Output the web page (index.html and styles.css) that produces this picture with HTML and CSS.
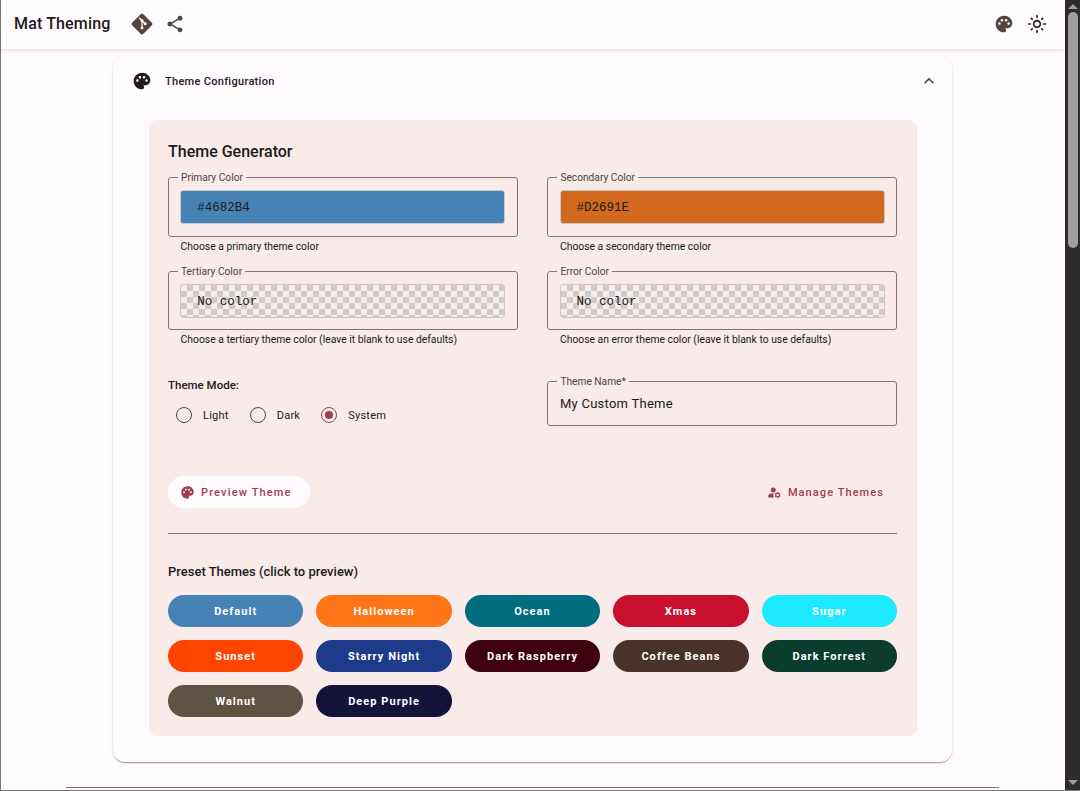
FILE: index.html
```html
<!DOCTYPE html>
<html>
<head>
	<meta charset="utf-8">
	<title>Mat Theming</title>
	<link rel="stylesheet" href="styles.css">
</head>
<body>
	<svg class="defs" aria-hidden="true">
		<symbol id="i-palette" viewBox="0 0 24 24"><path d="M12 2C6.49 2 2 6.49 2 12s4.49 10 10 10c1.38 0 2.5-1.12 2.5-2.5 0-.61-.23-1.2-.64-1.67-.08-.1-.13-.21-.13-.33 0-.28.22-.5.5-.5H16c3.31 0 6-2.69 6-6 0-4.96-4.49-9-10-9zm5.5 11c-.83 0-1.5-.67-1.5-1.5s.67-1.5 1.5-1.5 1.5.67 1.5 1.5-.67 1.5-1.5 1.5zm-3-4c-.83 0-1.5-.67-1.5-1.5S13.67 6 14.5 6s1.5.67 1.5 1.5S15.33 9 14.5 9zM5 11.5c0-.83.67-1.5 1.5-1.5s1.5.67 1.5 1.5S7.33 13 6.5 13 5 12.33 5 11.5zm6-4c0 .83-.67 1.5-1.5 1.5S8 8.33 8 7.5 8.67 6 9.5 6s1.5.67 1.5 1.5z"/></symbol>
		<symbol id="i-manage" viewBox="0 0 24 24"><circle cx="10" cy="8" r="4"/><path d="M10.67 13.02c-.22-.01-.44-.02-.67-.02-2.42 0-4.68.67-6.61 1.82-.88.52-1.39 1.5-1.39 2.53V20h9.26c-.79-1.13-1.26-2.51-1.26-4 0-1.07.25-2.07.67-2.98z"/><path d="M20.75 16c0-.22-.03-.42-.06-.63l1.14-1.01-1-1.73-1.45.49c-.32-.27-.68-.48-1.08-.63L18 11h-2l-.3 1.49c-.4.15-.76.36-1.08.63l-1.45-.49-1 1.73 1.14 1.01c-.03.21-.06.41-.06.63s.03.42.06.63l-1.14 1.01 1 1.73 1.45-.49c.32.27.68.48 1.08.63L16 21h2l.3-1.49c.4-.15.76-.36 1.08-.63l1.45.49 1-1.73-1.14-1.01c.03-.21.06-.41.06-.63zM17 18c-1.1 0-2-.9-2-2s.9-2 2-2 2 .9 2 2-.9 2-2 2z"/></symbol>
	</svg>

	<div class="window">
		<div class="app">
			<header class="toolbar">
				<span class="brand">Mat Theming</span>
				<svg class="tool git" viewBox="0 0 24 24">
					<rect x="4.2" y="4.2" width="15.6" height="15.6" rx="1.6" transform="rotate(45 12 12)"/>
					<path class="git-branch" d="M9.2 5.8l6 6M12 8.6v7.2"/>
					<circle class="git-node" cx="12" cy="8.6" r="1.5"/>
					<circle class="git-node" cx="15.2" cy="11.8" r="1.5"/>
					<circle class="git-node" cx="12" cy="15.8" r="1.5"/>
				</svg>
				<svg class="tool share" viewBox="0 0 24 24"><path d="M18 16.08c-.76 0-1.44.3-1.96.77L8.91 12.7c.05-.23.09-.46.09-.7s-.04-.47-.09-.7l7.05-4.11c.54.5 1.25.81 2.04.81 1.66 0 3-1.34 3-3s-1.34-3-3-3-3 1.34-3 3c0 .24.04.47.09.7L8.04 9.81C7.5 9.31 6.79 9 6 9c-1.66 0-3 1.34-3 3s1.34 3 3 3c.79 0 1.5-.31 2.04-.81l7.12 4.16c-.05.21-.08.43-.08.65 0 1.61 1.31 2.92 2.92 2.92s2.92-1.31 2.92-2.92-1.31-2.92-2.92-2.92z"/></svg>
				<span class="spacer"></span>
				<svg class="tool palette"><use href="#i-palette"/></svg>
				<svg class="tool sun" viewBox="0 0 24 24"><path d="M12 9c1.65 0 3 1.35 3 3s-1.35 3-3 3-3-1.35-3-3 1.35-3 3-3m0-2c-2.76 0-5 2.24-5 5s2.24 5 5 5 5-2.24 5-5-2.24-5-5-5zM2 13h2c.55 0 1-.45 1-1s-.45-1-1-1H2c-.55 0-1 .45-1 1s.45 1 1 1zm18 0h2c.55 0 1-.45 1-1s-.45-1-1-1h-2c-.55 0-1 .45-1 1s.45 1 1 1zM11 2v2c0 .55.45 1 1 1s1-.45 1-1V2c0-.55-.45-1-1-1s-1 .45-1 1zm0 18v2c0 .55.45 1 1 1s1-.45 1-1v-2c0-.55-.45-1-1-1s-1 .45-1 1zM5.99 4.58c-.39-.39-1.03-.39-1.41 0-.39.39-.39 1.03 0 1.41l1.06 1.06c.39.39 1.03.39 1.41 0s.39-1.03 0-1.41L5.99 4.58zm12.37 12.37c-.39-.39-1.03-.39-1.41 0-.39.39-.39 1.03 0 1.41l1.06 1.06c.39.39 1.03.39 1.41 0 .39-.39.39-1.03 0-1.41l-1.06-1.06zm1.06-10.96c.39-.39.39-1.03 0-1.41-.39-.39-1.03-.39-1.41 0l-1.06 1.06c-.39.39-.39 1.03 0 1.41s1.03.39 1.41 0l1.06-1.06zM7.05 18.36c.39-.39.39-1.03 0-1.41-.39-.39-1.03-.39-1.41 0l-1.06 1.06c-.39.39-.39 1.03 0 1.41s1.03.39 1.41 0l1.06-1.06z"/></svg>
			</header>

			<main class="content">
				<section class="card">
					<div class="card-head">
						<svg class="card-icon"><use href="#i-palette"/></svg>
						<span class="card-title">Theme Configuration</span>
						<svg class="chevron" viewBox="0 0 24 24"><path d="M12 8l-6 6 1.41 1.41L12 10.83l4.59 4.58L18 14z"/></svg>
					</div>

					<div class="panel">
						<h2 class="panel-title">Theme Generator</h2>

						<div class="color-grid">
							<div class="color-field">
								<div class="outline color-outline">
									<label>Primary Color</label>
									<div class="swatch swatch-primary">#4682B4</div>
								</div>
								<p class="hint">Choose a primary theme color</p>
							</div>
							<div class="color-field">
								<div class="outline color-outline">
									<label>Secondary Color</label>
									<div class="swatch swatch-secondary">#D2691E</div>
								</div>
								<p class="hint">Choose a secondary theme color</p>
							</div>
							<div class="color-field">
								<div class="outline color-outline">
									<label>Tertiary Color</label>
									<div class="swatch swatch-empty">No color</div>
								</div>
								<p class="hint">Choose a tertiary theme color (leave it blank to use defaults)</p>
							</div>
							<div class="color-field">
								<div class="outline color-outline">
									<label>Error Color</label>
									<div class="swatch swatch-empty">No color</div>
								</div>
								<p class="hint">Choose an error theme color (leave it blank to use defaults)</p>
							</div>
						</div>

						<div class="mode-row">
							<div class="mode">
								<div class="mode-label">Theme Mode:</div>
								<div class="radios">
									<span class="radio"><i class="dot"></i>Light</span>
									<span class="radio"><i class="dot"></i>Dark</span>
									<span class="radio checked"><i class="dot"></i>System</span>
								</div>
							</div>
							<div class="outline name-outline">
								<label>Theme Name*</label>
								<span class="name-value">My Custom Theme</span>
							</div>
						</div>

						<div class="actions">
							<button type="button" class="btn btn-raised"><svg><use href="#i-palette"/></svg>Preview Theme</button>
							<button type="button" class="btn btn-text"><svg><use href="#i-manage"/></svg>Manage Themes</button>
						</div>

						<hr class="divider">

						<h3 class="preset-title">Preset Themes (click to preview)</h3>
						<div class="presets">
							<button type="button" class="chip chip-default">Default</button>
							<button type="button" class="chip chip-halloween">Halloween</button>
							<button type="button" class="chip chip-ocean">Ocean</button>
							<button type="button" class="chip chip-xmas">Xmas</button>
							<button type="button" class="chip chip-sugar">Sugar</button>
							<button type="button" class="chip chip-sunset">Sunset</button>
							<button type="button" class="chip chip-starry">Starry Night</button>
							<button type="button" class="chip chip-raspberry">Dark Raspberry</button>
							<button type="button" class="chip chip-coffee">Coffee Beans</button>
							<button type="button" class="chip chip-forrest">Dark Forrest</button>
							<button type="button" class="chip chip-walnut">Walnut</button>
							<button type="button" class="chip chip-purple">Deep Purple</button>
						</div>
					</div>
				</section>

				<hr class="page-rule">
			</main>
		</div>

		<div class="scrollbar">
			<span class="arrow arrow-up"></span>
			<span class="thumb"></span>
			<span class="spacer"></span>
			<span class="arrow arrow-down"></span>
		</div>
	</div>
</body>
</html>
```

FILE: styles.css
```css
* {
	box-sizing: border-box;
}
html, body {
	height: 100%;
}
body {
	margin: 0;
	overflow: hidden;
	background: #fffbff;
	color: #201a1a;
	font-family: Roboto, "Liberation Sans", sans-serif;
}
.defs {
	display: none;
}

.window {
	display: flex;
	height: 791px;
	border-left: 1px solid #777;
	border-bottom: 1px solid #777;
}
.app {
	flex: 1;
	min-width: 0;
	display: flex;
	flex-direction: column;
}

/* top bar */
.toolbar {
	position: relative;
	z-index: 1;
	flex: none;
	display: flex;
	align-items: center;
	height: 49px;
	padding: 0 18px 2px 13px;
	background: #fffbff;
	box-shadow: 0 1px 5px rgba(0, 0, 0, .14);
}
.brand {
	font-size: 16px;
	font-weight: 500;
	letter-spacing: .15px;
	margin-right: 21px;
}
.tool {
	width: 20px;
	height: 20px;
	fill: #534341;
}
.git {
	width: 24px;
	height: 24px;
	margin-right: 11px;
	margin-left: -1px;
}
.git-branch {
	fill: none;
	stroke: #fffbff;
	stroke-width: 1.3;
}
.git-node {
	fill: #fffbff;
}
.spacer {
	flex: 1;
}
.palette {
	margin-right: 13px;
}
.sun {
	fill: #201a1a;
}

/* expansion panel */
.content {
	flex: 1;
	min-height: 0;
	overflow: hidden;
	padding: 7px 65px 0;
}
.card {
	width: 839px;
	margin: 0 0 0 47px;
	height: 706px;
	padding: 0 35px 0 36px;
	background: #fffbff;
	border-radius: 12px;
	box-shadow: 0 2px 1px -1px rgba(0, 0, 0, .2), 0 1px 1px rgba(0, 0, 0, .14), 0 1px 3px rgba(0, 0, 0, .12);
}
.card-head {
	display: flex;
	align-items: center;
	height: 50px;
	margin-bottom: 14px;
}
.card-icon {
	width: 20px;
	height: 20px;
	margin: 0 13px 0 -17px;
	fill: #201a1a;
}
.card-title {
	flex: 1;
	font-size: 11px;
	font-weight: 500;
	letter-spacing: .3px;
}
.chevron {
	width: 20px;
	height: 20px;
	fill: #534341;
	margin-right: -22px;
}

/* generator */
.panel {
	height: 616px;
	padding: 22px 20px 0 19px;
	background: #f9ebe9;
	border-radius: 8px;
}
.panel-title {
	margin: 0 0 16px;
	font-size: 16px;
	line-height: 19px;
	font-weight: 500;
}

.color-grid {
	display: grid;
	grid-template-columns: 350px 350px;
	column-gap: 29.4px;
}
.color-field {
	height: 93.5px;
}
.outline {
	position: relative;
	border: 1px solid #857371;
	border-radius: 3px;
}
.outline label {
	position: absolute;
	top: -6px;
	left: 9px;
	padding: 0 3px;
	background: #f9ebe9;
	color: #534341;
	font-size: 10.2px;
	line-height: 12px;
}
.color-outline {
	height: 59.5px;
	padding: 12px 11.9px 0 11.2px;
}
.swatch {
	height: 34px;
	padding-left: 16px;
	border: 1px solid #cdc8c8;
	border-radius: 3px;
	font-family: "Liberation Mono", "DejaVu Sans Mono", monospace;
	font-size: 12.5px;
	line-height: 34px;
	color: #201a1a;
}
.swatch-primary {
	background: #4682b4;
}
.swatch-secondary {
	background: #d2691e;
}
.swatch-empty {
	background-color: #f9ebe9;
	background-image:
		linear-gradient(45deg, #ccc 25%, transparent 25%),
		linear-gradient(-45deg, #ccc 25%, transparent 25%),
		linear-gradient(45deg, transparent 75%, #ccc 75%),
		linear-gradient(-45deg, transparent 75%, #ccc 75%);
	background-size: 12px 12px;
	background-position: 0 0, 0 6px, 6px -6px, -6px 0;
}
.hint {
	margin: 4px 0 0 12.6px;
	font-size: 10.35px;
	line-height: 12px;
	color: #201a1a;
}

.mode-row {
	display: grid;
	grid-template-columns: 350px 350px;
	column-gap: 29.4px;
	margin-top: 17px;
}
.mode-label {
	font-size: 11.5px;
	font-weight: 500;
	line-height: 14px;
	margin-top: -3px;
}
.radios {
	display: flex;
	margin: 15px 0 0 8px;
}
.radio {
	display: flex;
	align-items: center;
	height: 16px;
	margin-right: 21px;
	font-size: 11px;
	letter-spacing: .25px;
}
.dot {
	position: relative;
	width: 16px;
	height: 16px;
	margin-right: 11px;
	border: 1.3px solid #534341;
	border-radius: 50%;
}
.checked .dot {
	border-color: #9c414b;
}
.checked .dot:after {
	content: "";
	position: absolute;
	top: 2.7px;
	left: 2.7px;
	width: 8px;
	height: 8px;
	border-radius: 50%;
	background: #9c414b;
}
.name-outline {
	height: 45px;
	padding: 14px 12px 0 11.6px;
	font-size: 13px;
	line-height: 16px;
}
.name-value {
	letter-spacing: .25px;
}

.actions {
	display: flex;
	justify-content: space-between;
	margin-top: 50px;
}
.btn {
	display: flex;
	align-items: center;
	height: 32px;
	border: 0;
	border-radius: 16px;
	background: none;
	color: #9c414b;
	font-family: inherit;
	font-size: 11px;
	font-weight: 500;
	letter-spacing: 1.15px;
}
.btn svg {
	width: 15px;
	height: 15px;
	margin-right: 6px;
	fill: #9c414b;
}
.btn-raised {
	width: 142px;
	padding: 0 0 0 12px;
	background: #fffbff;
}
.btn-text {
	padding: 0 13px 0 0;
	letter-spacing: 1.08px;
}

.divider {
	height: 1px;
	margin: 25px 0 0;
	border: 0;
	background: #857371;
}
.preset-title {
	margin: 30px 0 16px;
	font-size: 13px;
	line-height: 15px;
	font-weight: 500;
}
.presets {
	display: grid;
	grid-template-columns: repeat(5, 1fr);
	gap: 13px;
}
.chip {
	height: 32px;
	padding: 0;
	border: 0;
	border-radius: 16px;
	color: #fff;
	font-family: inherit;
	font-size: 11px;
	font-weight: 700;
	letter-spacing: 1.05px;
}
.chip-default { background: #4682b4; }
.chip-halloween { background: #ff7518; }
.chip-ocean { background: #006d7e; }
.chip-xmas { background: #c8102e; }
.chip-sugar { background: #1de9ff; }
.chip-sunset { background: #ff4500; }
.chip-starry { background: #1e3a8a; }
.chip-raspberry { background: #3f000f; }
.chip-coffee { background: #4b312c; }
.chip-forrest { background: #0b3d2e; }
.chip-walnut { background: #5f5344; }
.chip-purple { background: #141338; }

.page-rule {
	height: 1px;
	width: 933px;
	margin: 25px 0 0;
	border: 0;
	background: #857371;
}

/* scrollbar */
.scrollbar {
	flex: none;
	display: flex;
	flex-direction: column;
	align-items: center;
	width: 15px;
	background: #2c2c2c;
	padding: 4px 0 5px;
}
.thumb {
	width: 10px;
	height: 236px;
	margin-top: 3px;
	border-radius: 5px;
	background: #9f9f9f;
}
.arrow {
	width: 0;
	height: 0;
	border-left: 5px solid transparent;
	border-right: 5px solid transparent;
}
.arrow-up {
	border-bottom: 5px solid #9f9f9f;
}
.arrow-down {
	border-top: 5px solid #9f9f9f;
}
```
